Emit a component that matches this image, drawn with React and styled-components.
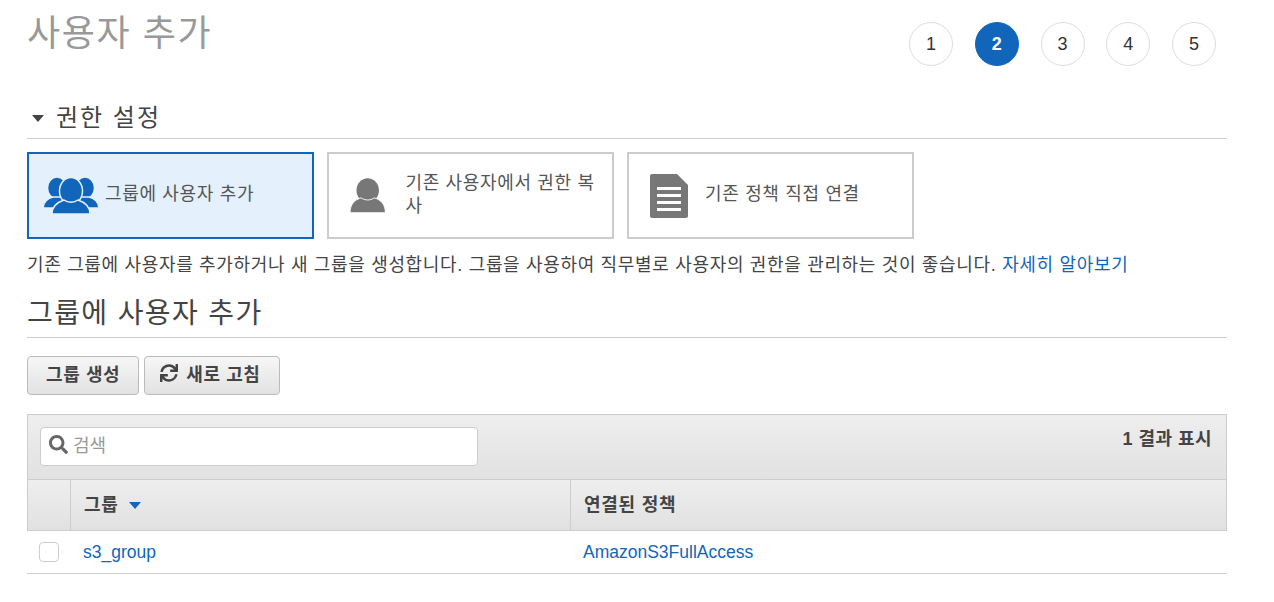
import React from 'react';
import styled, { createGlobalStyle } from 'styled-components';
import { FaSync, FaSearch } from 'react-icons/fa';

const GlobalStyle = createGlobalStyle`
  html, body {
    margin: 0;
    background: #fff;
    color: #444;
    font-family: "Liberation Sans", "Noto Sans CJK KR", sans-serif;
  }
`;

const Page = styled.div`
  width: 1200px;
  height: 602px;
  margin-left: 27px;
  overflow: hidden;
`;

const TopBar = styled.div`
  display: flex;
  justify-content: space-between;
  height: 93px;
`;

const Title = styled.h1`
  margin: 12px 0 0;
  font-size: 36px;
  line-height: 44px;
  font-weight: 400;
  letter-spacing: 1.6px;
  color: #999;
`;

const Steps = styled.div`
  display: flex;
  gap: 21.75px;
  padding: 22px 11px 0 0;
`;

const Step = styled.div`
  width: 44px;
  height: 44px;
  box-sizing: border-box;
  border-radius: 50%;
  display: flex;
  align-items: center;
  justify-content: center;
  font-size: 18px;
  font-weight: ${p => (p.$active ? 700 : 400)};
  color: ${p => (p.$active ? '#fff' : '#333')};
  background: ${p => (p.$active ? '#1166bb' : '#fff')};
  border: 1px solid ${p => (p.$active ? '#1166bb' : '#ddd')};
`;

const SectionHead = styled.div`
  display: flex;
  align-items: center;
  height: 45px;
  border-bottom: 1px solid #ccc;
  font-size: 24px;
  letter-spacing: 2px;
  color: #444;
`;

const Caret = styled.span`
  width: 0;
  height: 0;
  margin: 6px 12px 0 5px;
  border-left: 6px solid transparent;
  border-right: 6px solid transparent;
  border-top: 7px solid #444;
`;

const Cards = styled.div`
  display: flex;
  gap: 13px;
  margin-top: 13px;
`;

const Card = styled.div`
  width: 287px;
  height: 87px;
  box-sizing: border-box;
  display: flex;
  align-items: center;
  gap: ${p => p.$gap}px;
  padding: 0 14px 0 ${p => p.$pad}px;
  border: 2px solid ${p => (p.$active ? '#1166bb' : '#ccc')};
  background: ${p => (p.$active ? '#e4f1fd' : '#fff')};
  font-size: 18px;
  line-height: 23px;
  letter-spacing: 0.67px;
  color: #555;
`;

const CardLabel = styled.span`
  margin-bottom: 2px;
  word-break: break-all;
`;

const Description = styled.p`
  margin: 15px 0 0;
  font-size: 18px;
  line-height: 23px;
  letter-spacing: 0.67px;
  color: #444;
  white-space: nowrap;
`;

const Link = styled.a`
  color: #1166bb;
  text-decoration: none;
`;

const SubTitle = styled.h2`
  margin: 13px 0 0;
  height: 48px;
  padding-top: 6px;
  box-sizing: border-box;
  border-bottom: 1px solid #ccc;
  font-size: 28px;
  line-height: 36px;
  font-weight: 400;
  letter-spacing: 1.4px;
  color: #444;
`;

const Actions = styled.div`
  display: flex;
  gap: 5px;
  margin-top: 18px;
`;

const Button = styled.button`
  height: 39px;
  padding: 0 18px 5px ${p => (p.$icon ? 15 : 18)}px;
  display: flex;
  align-items: center;
  gap: 8px;
  border: 1px solid #bbb;
  border-radius: 4px;
  background: linear-gradient(#f6f6f6, #e2e2e2);
  font-family: inherit;
  font-size: 18px;
  font-weight: 700;
  letter-spacing: 0.6px;
  color: #444;
`;

const Table = styled.div`
  margin-top: 19px;
  border-bottom: 1px solid #ccc;
`;

const Toolbar = styled.div`
  height: 66px;
  box-sizing: border-box;
  display: flex;
  justify-content: space-between;
  padding: 12px 14px 0 12px;
  border: 1px solid #ccc;
  background: linear-gradient(#eee, #e1e1e1);
`;

const Search = styled.div`
  width: 438px;
  height: 39px;
  box-sizing: border-box;
  display: flex;
  align-items: center;
  gap: 5px;
  padding: 0 0 5px 8px;
  border: 1px solid #ccc;
  border-radius: 4px;
  background: #fff;
  font-size: 18px;
  color: #999;
`;

const Count = styled.div`
  font-size: 18px;
  line-height: 24px;
  font-weight: 700;
  letter-spacing: 0.45px;
  color: #444;
`;

const Row = styled.div`
  display: grid;
  grid-template-columns: 42px 500px 1fr;
  align-items: center;
`;

const HeadRow = styled(Row)`
  height: 51px;
  box-sizing: border-box;
  border: 1px solid #ccc;
  border-top: 0;
  background: linear-gradient(#eee, #e1e1e1);
`;

const HeadCell = styled.div`
  height: 100%;
  box-sizing: border-box;
  display: flex;
  align-items: center;
  gap: 10px;
  padding: 0 0 5px 13px;
  border-left: ${p => (p.$plain ? 0 : '1px solid #ccc')};
  font-size: 18px;
  font-weight: 700;
  letter-spacing: 0.75px;
  color: #444;
`;

const SortCaret = styled.span`
  width: 0;
  height: 0;
  margin-top: 6px;
  border-left: 6px solid transparent;
  border-right: 6px solid transparent;
  border-top: 7px solid #1166bb;
`;

const BodyRow = styled(Row)`
  height: 42px;
`;

const CheckCell = styled.div`
  padding-left: 12px;
`;

const Check = styled.span`
  display: block;
  width: 20px;
  height: 20px;
  box-sizing: border-box;
  border: 1px solid #ccc;
  border-radius: 4px;
  background: #fff;
`;

const LinkCell = styled.div`
  padding-left: 14px;
  font-size: 17.5px;
`;

const GroupIcon = () => (
  <svg width="56" height="38" viewBox="0 0 56 38">
    <g fill="#1166bb" stroke="#e4f1fd" strokeWidth="1.5">
      <ellipse cx="14" cy="11" rx="9.5" ry="11" />
      <ellipse cx="42" cy="11" rx="9.5" ry="11" />
      <path d="M0 31c0-6 5-10 10-11h36c5 1 10 5 10 11H0z" />
      <ellipse cx="28" cy="14" rx="11.5" ry="13.5" />
      <path d="M9 37c0-8 6-12 12-14 4 3 10 3 14 0 6 2 12 6 12 14H9z" />
    </g>
  </svg>
);

const UserIcon = () => (
  <svg width="38" height="36" viewBox="0 0 38 36">
    <ellipse cx="19" cy="12" rx="12" ry="13" fill="#777" />
    <path d="M0 36c0-9 5-14 12-16 4 3 10 3 14 0 7 2 12 7 12 16H0z" fill="#777" stroke="#fff" strokeWidth="1" />
  </svg>
);

const DocIcon = () => (
  <svg width="38" height="44" viewBox="0 0 38 44">
    <path d="M2 0h25l11 11v31a2 2 0 0 1-2 2H2a2 2 0 0 1-2-2V2a2 2 0 0 1 2-2z" fill="#777" />
    <g fill="#fff">
      <rect x="7" y="13" width="24" height="3" />
      <rect x="7" y="20" width="24" height="3" />
      <rect x="7" y="27" width="24" height="3" />
      <rect x="7" y="34" width="24" height="3" />
    </g>
  </svg>
);

export default function App() {
  return (
    <>
      <GlobalStyle />
      <Page>
        <TopBar>
          <Title>사용자 추가</Title>
          <Steps>
            {[1, 2, 3, 4, 5].map(n => (
              <Step key={n} $active={n === 2}>{n}</Step>
            ))}
          </Steps>
        </TopBar>
        <SectionHead><Caret />권한 설정</SectionHead>
        <Cards>
          <Card $active $pad={14} $gap={6}><GroupIcon /><CardLabel>그룹에 사용자 추가</CardLabel></Card>
          <Card $pad={21} $gap={20}><UserIcon /><CardLabel>기존 사용자에서 권한 복사</CardLabel></Card>
          <Card $pad={21} $gap={17}><DocIcon /><CardLabel>기존 정책 직접 연결</CardLabel></Card>
        </Cards>
        <Description>
          기존 그룹에 사용자를 추가하거나 새 그룹을 생성합니다. 그룹을 사용하여 직무별로 사용자의 권한을 관리하는 것이 좋습니다. <Link href="#">자세히 알아보기</Link>
        </Description>
        <SubTitle>그룹에 사용자 추가</SubTitle>
        <Actions>
          <Button>그룹 생성</Button>
          <Button $icon><FaSync size={18} color="#444" />새로 고침</Button>
        </Actions>
        <Table>
          <Toolbar>
            <Search><FaSearch size={19} color="#666" />검색</Search>
            <Count>1 결과 표시</Count>
          </Toolbar>
          <HeadRow>
            <HeadCell $plain />
            <HeadCell>그룹 <SortCaret /></HeadCell>
            <HeadCell>연결된 정책</HeadCell>
          </HeadRow>
          <BodyRow>
            <CheckCell><Check /></CheckCell>
            <LinkCell><Link href="#">s3_group</Link></LinkCell>
            <LinkCell><Link href="#">AmazonS3FullAccess</Link></LinkCell>
          </BodyRow>
        </Table>
      </Page>
    </>
  );
}
